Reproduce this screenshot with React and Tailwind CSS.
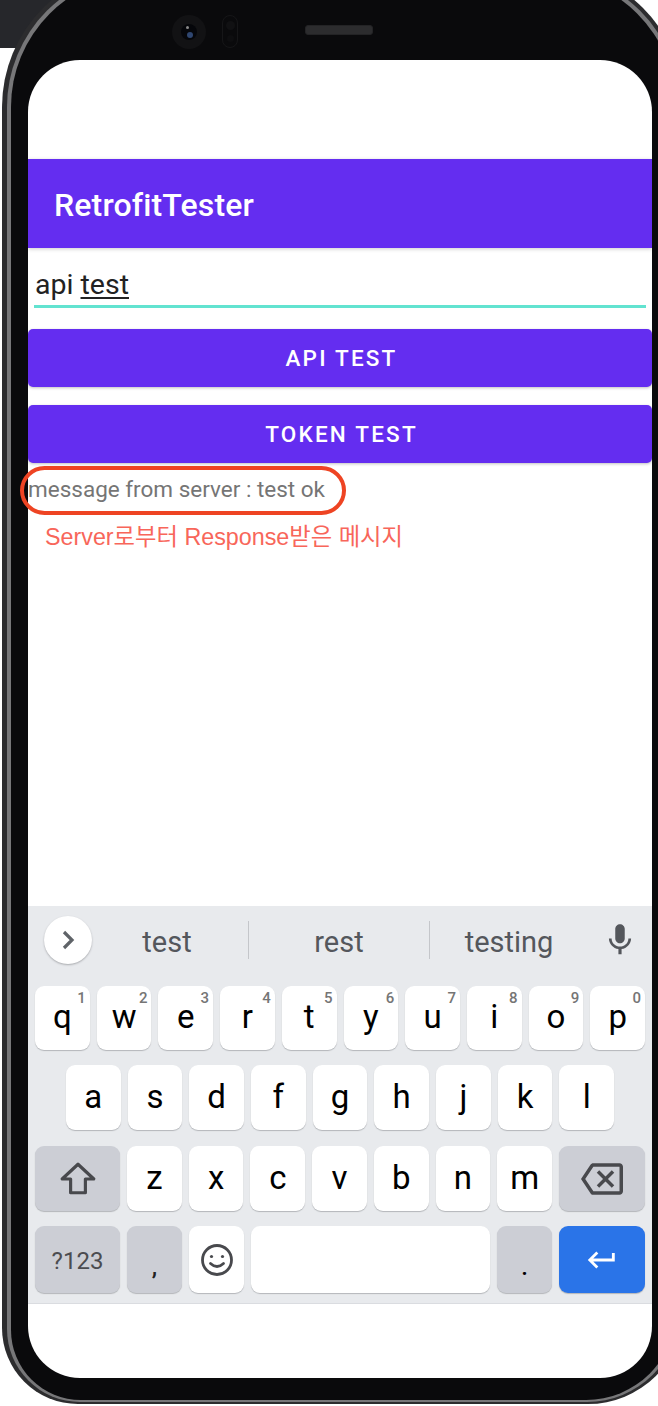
/**
 * Phone mockup showing the RetrofitTester app with the keyboard open.
 */
const FONT = "font-['Roboto',sans-serif]";

const TOP_ROW = [
  ['q', '1'], ['w', '2'], ['e', '3'], ['r', '4'], ['t', '5'],
  ['y', '6'], ['u', '7'], ['i', '8'], ['o', '9'], ['p', '0'],
];
const MID_ROW = ['a', 's', 'd', 'f', 'g', 'h', 'j', 'k', 'l'];
const LOW_ROW = ['z', 'x', 'c', 'v', 'b', 'n', 'm'];

const keyBase = 'relative flex items-center justify-center rounded-[9px] shadow-[0_1px_1px_#b4b6ba]';
const lightKey = `${keyBase} bg-white`;
const darkKey = `${keyBase} bg-[#ccced5]`;

function LetterKey({ label, hint }) {
  return (
    <div className={`${lightKey} flex-1 text-[33px] leading-none text-black pb-[3px]`}>
      {label}
      {hint && (
        <span className="absolute top-[2px] right-[4px] text-[15px] font-medium leading-[20px] text-[#757575]">
          {hint}
        </span>
      )}
    </div>
  );
}

function PhoneCamera() {
  return (
    <div className="absolute top-[40px] left-[161px] flex items-start">
      <div className="flex h-[34px] w-[34px] items-center justify-center rounded-full bg-[#121214]">
        <div className="relative h-[16px] w-[16px] rounded-full bg-[#05060a]">
          <div className="absolute left-[5px] top-[2px] h-[3px] w-[3px] rounded-full bg-[#8a8a8a]" />
          <div className="absolute left-[6px] top-[8px] h-[6px] w-[6px] rounded-full bg-[#2f4670]" />
        </div>
      </div>
      <div className="ml-[16px] flex h-[33px] w-[16px] flex-col items-center justify-around rounded-full border border-[#161618] py-[2px]">
        <div className="h-[9px] w-[9px] rounded-full bg-[#111113]" />
        <div className="h-[7px] w-[7px] rounded-full bg-[#0e0e10]" />
      </div>
      <div className="ml-[67px] mt-[10px] h-[10px] w-[68px] rounded-[3px] border border-[#232325] bg-[#2c2c2e]" />
    </div>
  );
}

function Keyboard() {
  return (
    <div className="bg-[#e8eaed] border-b border-[#dadce0] h-[398px] px-[7px] pt-[10px]">
      {/* Suggestion strip */}
      <div className="flex h-[48px] items-center text-[29px] text-[#54575c] -mr-[7px]">
        <div className="ml-[9px] flex h-[48px] w-[48px] shrink-0 items-center justify-center rounded-full bg-white shadow-[0_1px_2px_#a8aaae]">
          <svg width="24" height="24" viewBox="0 0 24 24" fill="none" stroke="#5f6368" strokeWidth="3.2">
            <polyline points="8,4 16,12 8,20" />
          </svg>
        </div>
        <div className="mt-[5px] w-[156px] shrink-0 pr-[6px] text-center">test</div>
        <div className="h-[38px] w-px bg-[#c4c6ca]" />
        <div className="mt-[5px] w-[180px] shrink-0 text-center">rest</div>
        <div className="h-[38px] w-px bg-[#c4c6ca]" />
        <div className="mt-[5px] w-[158px] shrink-0 text-center">testing</div>
        <svg width="38" height="38" viewBox="0 0 24 24" fill="#54575c" className="ml-[13px]">
          <path d="M12 14c1.66 0 2.99-1.34 2.99-3L15 5c0-1.66-1.34-3-3-3S9 3.34 9 5v6c0 1.66 1.34 3 3 3zm5.3-3c0 3-2.54 5.1-5.3 5.1S6.7 14 6.7 11H5c0 3.41 2.72 6.23 6 6.72V21h2v-3.28c3.28-.48 6-3.3 6-6.72h-1.7z" />
        </svg>
      </div>

      <div className="mt-[22px] flex h-[64px] gap-[7px]">
        {TOP_ROW.map(([label, hint]) => (
          <LetterKey key={label} label={label} hint={hint} />
        ))}
      </div>

      <div className="mt-[15px] flex h-[65px] gap-[7px] px-[31px]">
        {MID_ROW.map((label) => (
          <LetterKey key={label} label={label} />
        ))}
      </div>

      <div className="mt-[16px] flex h-[65px] gap-[7px]">
        <div className={`${darkKey} w-[85px] shrink-0`}>
          <svg width="38" height="38" viewBox="0 0 36 36" fill="none" stroke="#48494d" strokeWidth="3" strokeLinejoin="round">
            <path d="M18 4 L33 18 L25 18 L25 31 L11 31 L11 18 L3 18 Z" />
          </svg>
        </div>
        {LOW_ROW.map((label) => (
          <LetterKey key={label} label={label} />
        ))}
        <div className={`${darkKey} w-[86px] shrink-0`}>
          <svg width="42" height="42" viewBox="0 0 24 24" fill="#48494d">
            <path d="M22 3H7c-.69 0-1.23.35-1.59.88L0 12l5.41 8.11c.36.53.9.89 1.59.89h15c1.1 0 2-.9 2-2V5c0-1.1-.9-2-2-2zm0 16H7.07L2.4 12l4.66-7H22v14zm-11.59-2L14 13.41 17.59 17 19 15.59 15.41 12 19 8.41 17.59 7 14 10.59 10.41 7 9 8.41 12.59 12 9 15.59z" />
          </svg>
        </div>
      </div>

      <div className="mt-[15px] flex h-[67px] gap-[7px]">
        <div className={`${darkKey} w-[85px] shrink-0 pt-[2px] text-[24px] text-[#4b4c50]`}>?123</div>
        <div className={`${darkKey} w-[55px] shrink-0 pt-[14px] text-[24px] font-medium text-[#222]`}>,</div>
        <div className={`${lightKey} w-[55px] shrink-0`}>
          <svg width="34" height="34" viewBox="0 0 34 34" fill="none" stroke="#48494d" strokeWidth="2.8">
            <circle cx="17" cy="17" r="14.5" />
            <circle cx="11.5" cy="13.5" r="1.6" fill="#48494d" stroke="none" />
            <circle cx="22.5" cy="13.5" r="1.6" fill="#48494d" stroke="none" />
            <path d="M10.5 20.5 Q17 26.5 23.5 20.5" strokeLinecap="round" />
          </svg>
        </div>
        <div className={`${lightKey} flex-1`} />
        <div className={`${darkKey} w-[55px] shrink-0 pt-[14px] text-[24px] font-medium text-black`}>.</div>
        <div className={`${keyBase} w-[86px] shrink-0 bg-[#2a74e8]`}>
          <svg width="34" height="34" viewBox="0 0 24 24" fill="#fff">
            <path d="M19 7v4H5.83l3.58-3.59L8 6l-6 6 6 6 1.41-1.41L5.83 13H21V7z" />
          </svg>
        </div>
      </div>
    </div>
  );
}

export default function App() {
  return (
    <div className={`${FONT} relative h-[1406px] w-[658px] overflow-hidden bg-white`}>
      {/* scrap of desktop behind the phone */}
      <div className="absolute left-0 top-0 h-[48px] w-[60px] bg-[#26272b]" />

      <div className="relative ml-[2px] -mt-[33px] h-[1437px] w-[682px] rounded-tl-[140px] rounded-tr-[140px] rounded-bl-[76px] rounded-br-[96px] bg-[#2c2c2e] p-[4px] pb-[2px] pl-[5px]">
        <div className="h-full rounded-tl-[136px] rounded-tr-[136px] rounded-bl-[73px] rounded-br-[93px] bg-[#777779] p-[4px] pb-[2px]">
          <div className="relative h-full rounded-tl-[132px] rounded-tr-[132px] rounded-bl-[70px] rounded-br-[90px] bg-[#0a0a0c] pb-[22px] pl-[17px] pr-[24px] pt-[85px]">
            <PhoneCamera />

            {/* Screen */}
            <div className="flex h-full flex-col overflow-hidden rounded-[52px] bg-white">
              <div className="h-[99px] shrink-0" />

              <div className="flex h-[89px] shrink-0 items-center bg-[#642df0] pl-[26px] pt-[2px] text-[32px] font-medium tracking-[0.15px] text-white shadow-[0_1px_4px_rgba(0,0,0,0.2)]">
                RetrofitTester
              </div>

              {/* Text field */}
              <div className="mx-[6px] mt-[16px] h-[44px] border-b-[3px] border-[#62e3d0] text-[28.5px] leading-[42px] text-[#222]">
                <span className="pl-px">api </span>
                <span className="underline underline-offset-[3px] decoration-[2px]">test</span>
              </div>

              <button className="mt-[21px] h-[58px] shrink-0 rounded-[5px] bg-[#642df0] pl-[3px] pt-[2px] text-[22.5px] font-medium tracking-[2.2px] text-white shadow-[0_1px_3px_rgba(0,0,0,0.25)]">
                API TEST
              </button>
              <button className="mt-[18px] h-[58px] shrink-0 rounded-[5px] bg-[#642df0] pl-[3px] pt-[2px] text-[22.5px] font-medium tracking-[2.2px] text-white shadow-[0_1px_3px_rgba(0,0,0,0.25)]">
                TOKEN TEST
              </button>

              <div className="relative mt-[12px] h-[28px] text-[22.5px] leading-[28px] text-[#757575]">
                message from server : test ok
              </div>
              <div className="mt-[19px] pl-[17px] font-['Liberation_Sans','Noto_Sans_CJK_KR',sans-serif] text-[23.3px] leading-[30px] text-[#f8665a]">
                Server로부터 Response받은 메시지
              </div>

              <div className="flex-1" />
              <Keyboard />
              <div className="h-[74px] shrink-0" />
            </div>

            {/* Red annotation ring round the message */}
            <div className="absolute left-[9px] top-[491px] h-[49px] w-[326px] rounded-[25px] border-[4px] border-[#ee4423]" />
          </div>
        </div>
      </div>
    </div>
  );
}
